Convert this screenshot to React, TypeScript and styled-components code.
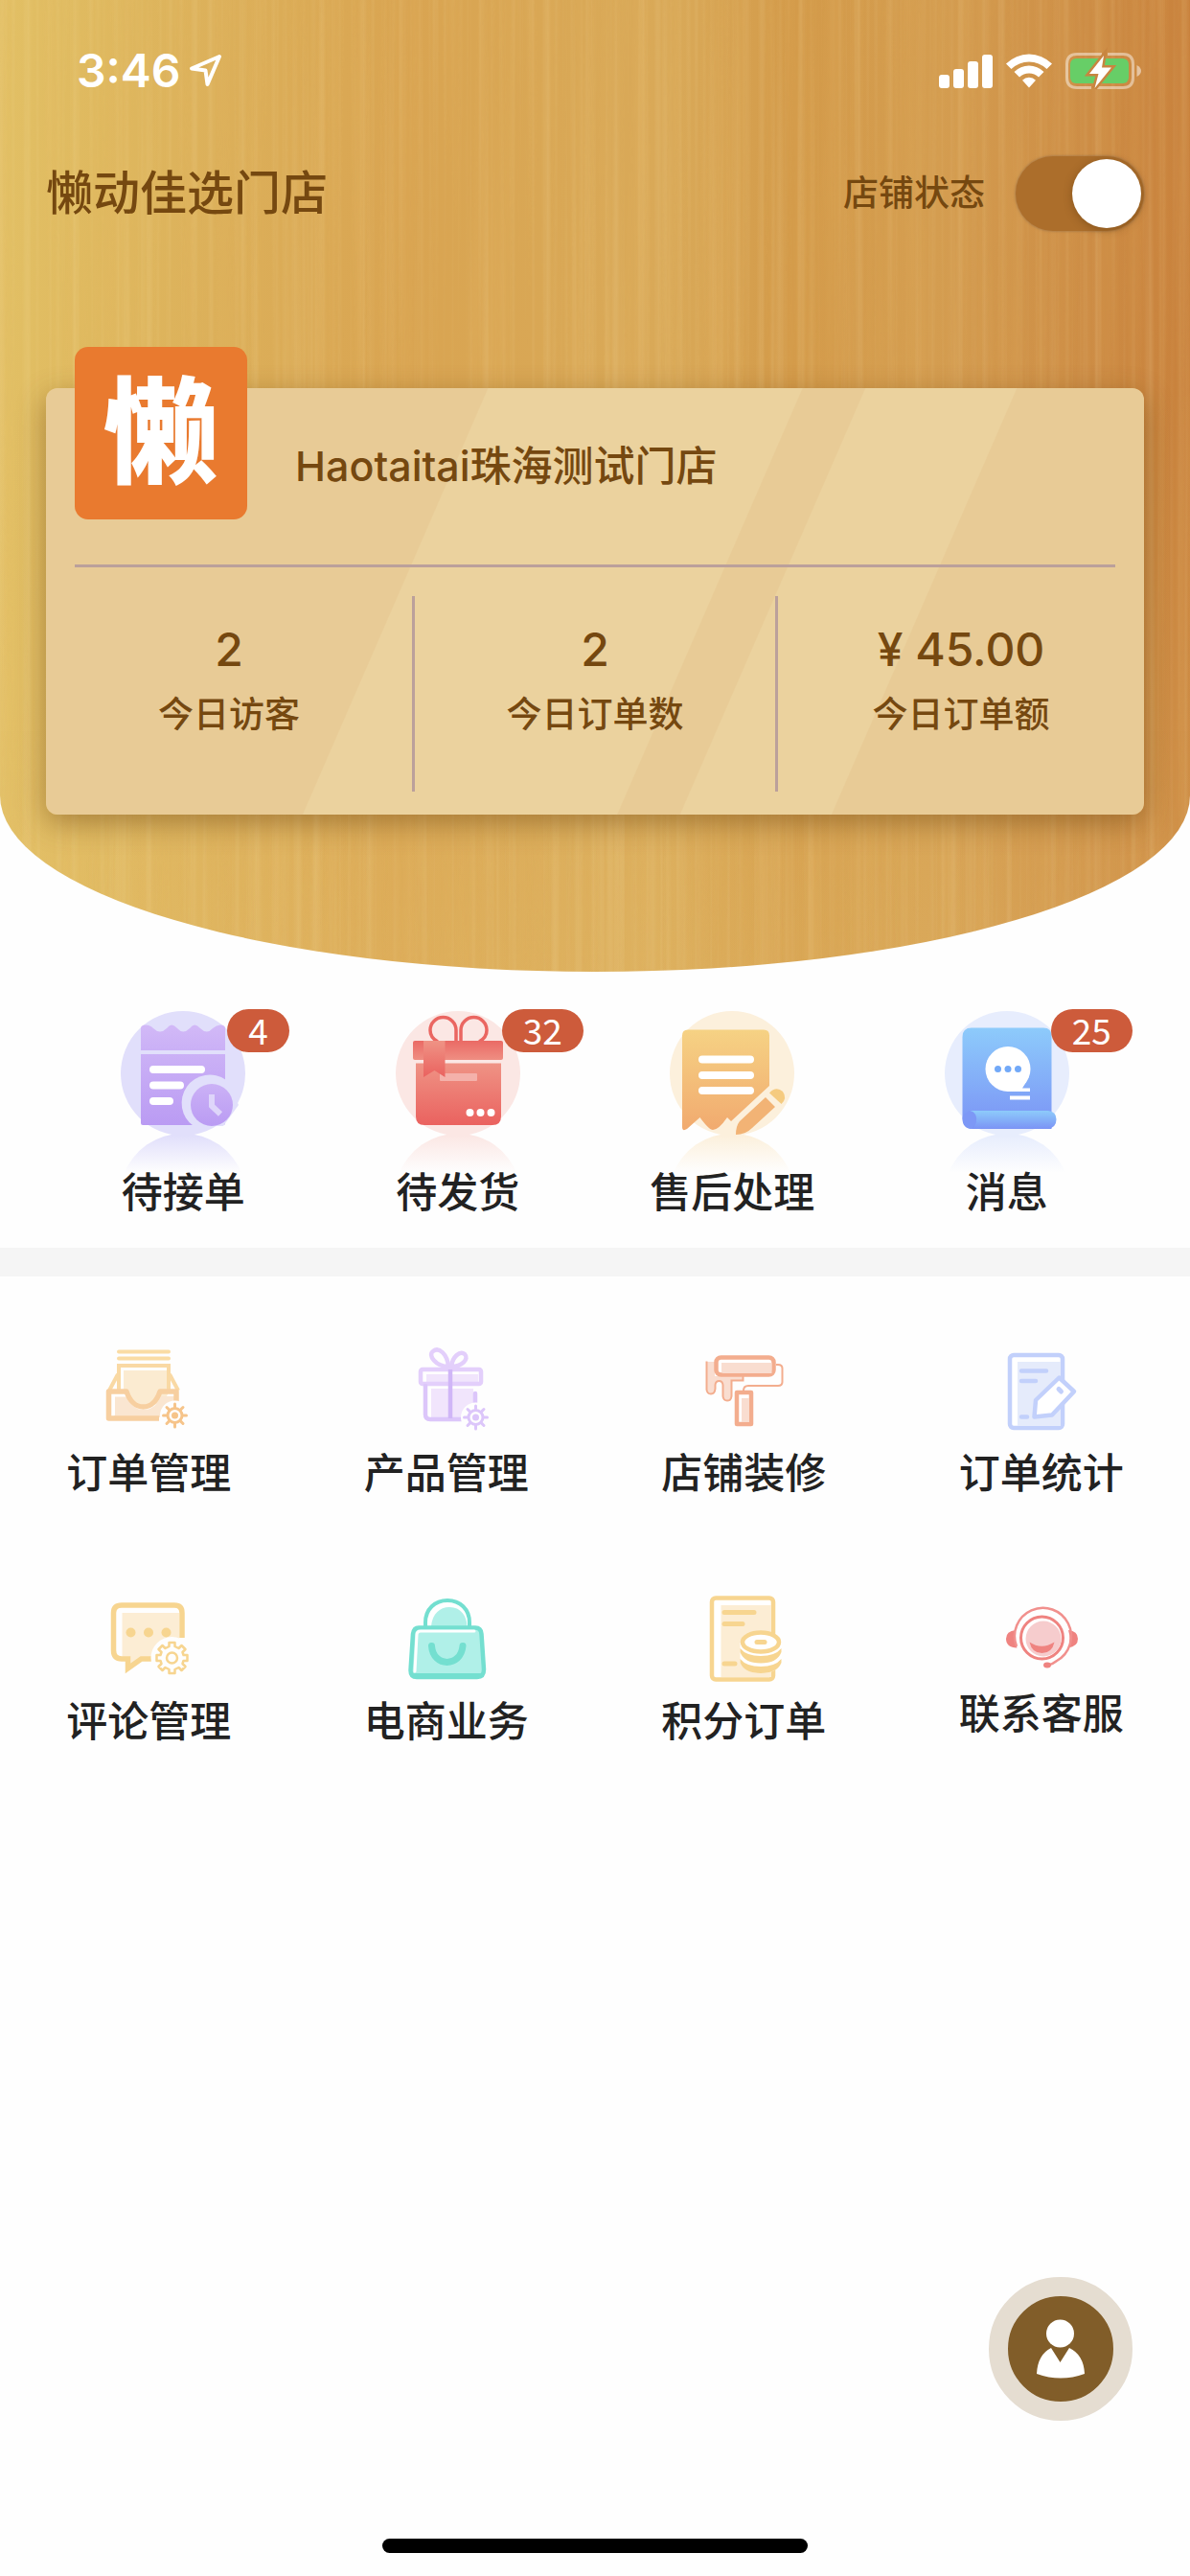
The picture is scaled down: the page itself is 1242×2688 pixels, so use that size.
import React, { useId, useState } from "react";
import styled, { createGlobalStyle } from "styled-components";

const GlobalStyle = createGlobalStyle`
  *, *::before, *::after { box-sizing: border-box; }
  body {
    margin: 0;
    background: #fefefe;
    color: #222;
    font-family: Inter, "Noto Sans CJK SC", sans-serif;
  }
`;

const Screen = styled.div`
  min-height: 100vh;
  overflow-x: hidden;
`;

/* ---------- header ---------- */

const Header = styled.header`
  position: relative;
  overflow: hidden;
  padding: 44px 48px 164px;
  border-radius: 0 0 50% 50% / 0 0 184px 184px;
  background:
    linear-gradient(180deg, rgba(232, 196, 112, 0) 40%, rgba(232, 196, 112, 0.3) 100%),
    linear-gradient(
      91deg,
      #e2c065 0%,
      #dfb95f 8%,
      #dcb05a 18%,
      #d9a451 34%,
      #d9a856 48%,
      #d9a958 56%,
      #d39a49 66%,
      #d49d50 78%,
      #cd8d45 90%,
      #c8803b 100%
    );
  color: #754810;
`;

const Grain = styled.svg`
  position: absolute;
  inset: 0;
  width: 100%;
  height: 100%;
`;

const StatusBar = styled.div`
  position: relative;
  display: flex;
  align-items: center;
  justify-content: space-between;
  height: 60px;
  padding: 0 2px 0 32px;
  color: #fff;
`;

const StatusGroup = styled.div<{ $gap: number }>`
  display: flex;
  align-items: center;
  gap: ${(p) => p.$gap}px;
`;

const Clock = styled.span`
  font-size: 48px;
  font-weight: 600;
  line-height: 60px;
`;

const TitleRow = styled.div`
  position: relative;
  display: flex;
  align-items: center;
  justify-content: space-between;
  margin-top: 59px;
`;

const Title = styled.h1`
  margin: 0;
  font-size: 49px;
  font-weight: 500;
  line-height: 60px;
`;

const SwitchLabel = styled.label`
  display: flex;
  align-items: center;
  gap: 32px;
  font-size: 37px;
  font-weight: 500;
  line-height: 50px;
`;

const Switch = styled.input`
  appearance: none;
  display: flex;
  width: 134px;
  height: 78px;
  margin: 0;
  padding: 3px;
  border-radius: 39px;
  background: #c9a273;
  box-shadow: 0 0 2px 1px rgba(150, 110, 70, 0.5);

  &::before {
    content: "";
    width: 72px;
    height: 72px;
    border-radius: 50%;
    background: #fff;
    box-shadow: 0 2px 10px rgba(70, 40, 0, 0.35);
  }
  &:checked {
    justify-content: flex-end;
    background: #ac6e2b;
  }
`;

const Card = styled.section`
  position: relative;
  margin-top: 164px;
  padding-bottom: 24px;
  border-radius: 12px;
  background: linear-gradient(
    113.5deg,
    #e8cb96 34.4%,
    #ebd29e 34.5%,
    #ebd29e 58.9%,
    #e8cb96 59%,
    #e8cb96 63.8%,
    #ebd29e 63.9%,
    #ebd29e 75.6%,
    #e8cb96 75.7%
  );
  box-shadow: 0 9px 30px rgba(100, 60, 10, 0.45);
`;

const CardHead = styled.div`
  display: flex;
  align-items: flex-start;
  gap: 50px;
  height: 187px;
  margin: 0 30px;
  border-bottom: 3px solid #bba09b;
`;

const Logo = styled.div`
  display: flex;
  align-items: center;
  justify-content: center;
  width: 180px;
  height: 180px;
  margin-top: -43px;
  border-radius: 14px;
  background: #e97a2f;
  color: #fff;
  font-size: 120px;
  font-weight: 900;
  line-height: 180px;
`;

const StoreName = styled.h2`
  margin: 51px 0 0;
  font-size: 43px;
  font-weight: 500;
  line-height: 60px;
`;

const Stats = styled.dl`
  display: grid;
  grid-template-columns: repeat(3, 1fr);
  margin: 30px 0 0;
`;

const Stat = styled.div`
  display: flex;
  flex-direction: column-reverse;
  gap: 13px;
  padding: 26px 0 55px;
  font-weight: 500;
  text-align: center;

  &:nth-child(2) {
    border: solid #bba09b;
    border-width: 0 3px;
  }
`;

const StatLabel = styled.dt`
  font-size: 37px;
  line-height: 50px;
`;

const StatValue = styled.dd`
  margin: 0;
  font-size: 48px;
  line-height: 60px;
`;

/* ---------- menus ---------- */

const QuickNav = styled.nav`
  display: grid;
  grid-template-columns: repeat(4, 1fr);
  padding: 40px 48px 28px;
  border-bottom: 30px solid #f5f5f5;
`;

const MenuGrid = styled.nav`
  display: grid;
  grid-template-columns: repeat(4, 1fr);
  row-gap: 97px;
  padding-top: 73px;
`;

const MenuLink = styled.a<{ $gap: number }>`
  display: flex;
  flex-direction: column;
  align-items: center;
  gap: ${(p) => p.$gap}px;
  color: #222;
  font-size: 43px;
  font-weight: 500;
  line-height: 60px;
  text-decoration: none;
`;

const QuickIcon = styled.span`
  position: relative;
  display: block;
  width: 132px;
  height: 160px;
`;

const Art = styled.svg`
  display: block;
  overflow: visible;
  fill: none;
`;

const Badge = styled.span`
  position: absolute;
  left: 112px;
  top: -1px;
  padding: 0 22px 2px;
  border-radius: 23px;
  background: #cd5b3b;
  color: #fff;
  font-family: "Noto Sans CJK SC", sans-serif;
  font-size: 37px;
  font-weight: 400;
  line-height: 43px;
`;

const ProfileButton = styled.button`
  position: fixed;
  right: 60px;
  bottom: 162px;
  width: 150px;
  height: 150px;
  padding: 0;
  border: 20px solid #e5ddd1;
  border-radius: 50%;
  background: #815d29;
`;

const HomeIndicator = styled.div`
  position: fixed;
  bottom: 24px;
  left: 50%;
  width: 444px;
  height: 15px;
  margin-left: -222px;
  border-radius: 8px;
  background: #000;
`;

/* ---------- status icons ---------- */

const LocationIcon = () => (
  <Art width="36" height="36" viewBox="0 0 36 36" aria-hidden="true">
    <path d="M32 3 L3 15.500 L17.500 17.500 L19.500 32 Z" stroke="#fff" strokeWidth="4" strokeLinejoin="round" />
  </Art>
);

const SignalIcon = () => (
  <Art width="56" height="36" viewBox="0 0 56 36" aria-hidden="true">
    <g fill="#fff">
      <rect x="0" y="22" width="11" height="14" rx="3" />
      <rect x="15" y="16" width="11" height="20" rx="3" />
      <rect x="30" y="8" width="11" height="28" rx="3" />
      <rect x="45" y="1" width="11" height="35" rx="3" />
    </g>
  </Art>
);

const WifiIcon = () => (
  <Art width="48" height="36" viewBox="0 0 48 36" aria-hidden="true">
    <g fill="#fff">
      <path d="M0 10.500 A34 34 0 0 1 48 10.500 L42.500 16 A26.500 26.500 0 0 0 5.500 16 Z" />
      <path d="M8.500 19 A22 22 0 0 1 39.500 19 L34 24.500 A14.500 14.500 0 0 0 14 24.500 Z" />
      <path d="M17 27.700 A10 10 0 0 1 31 27.700 L24 35.500 Z" />
    </g>
  </Art>
);

const BatteryIcon = () => (
  <Art width="80" height="38" viewBox="0 0 80 38" aria-hidden="true">
    <path d="M38 1.500 H12 Q1.500 1.500 1.500 12 V26 Q1.500 36.500 12 36.500 H27" stroke="#fff" strokeOpacity=".45" strokeWidth="3" />
    <path d="M44 1.500 H60 Q70.500 1.500 70.500 12 V26 Q70.500 36.500 60 36.500 H33" stroke="#fff" strokeOpacity=".45" strokeWidth="3" />
    <path d="M74.500 13 Q79 15.500 79 19 Q79 22.500 74.500 25 Z" fill="#fff" fillOpacity=".5" />
    <rect x="5" y="6" width="61" height="26" rx="6" fill="#67ce67" />
    <path d="M40 3 L25 22 H34.500 L30.500 37 L48 15.500 H38 Z" fill="#fff" stroke="#c88540" strokeWidth="5" paintOrder="stroke" />
  </Art>
);

/* ---------- quick icons ---------- */

type FadeProps = { id: string; from: string; to: string };

const Fade = ({ id, from, to }: FadeProps) => (
  <linearGradient id={id} x1="0" y1="0" x2="0" y2="1">
    <stop offset="0" stopColor={from} />
    <stop offset="1" stopColor={to} />
  </linearGradient>
);

const Orb = ({ tint, children }: { tint: string; children: React.ReactNode }) => {
  const id = useId();
  return (
    <Art width="132" height="160" viewBox="0 0 132 160" aria-hidden="true">
      <defs>
        <linearGradient id={id} gradientUnits="userSpaceOnUse" x1="0" y1="131" x2="0" y2="170">
          <stop offset="0" stopColor={tint} />
          <stop offset="1" stopColor={tint} stopOpacity="0" />
        </linearGradient>
      </defs>
      <circle cx="66" cy="66" r="65" fill={tint} />
      <path d="M4 172 A66 66 0 0 1 128 172 Z" fill={`url(#${id})`} />
      {children}
    </Art>
  );
};

const PendingIcon = () => (
  <Orb tint="#e1dffb">
    <defs>
      <Fade id="pendTop" from="#d2b9f7" to="#cab0f6" />
      <Fade id="pendBody" from="#cbb1f6" to="#ba9bf3" />
    </defs>
    <path d="M22 19 Q22 15.500 27 15.500 Q32 15.500 35 19 Q42 26 49 19 Q54 12 60 19 Q66 26 73 19 Q78 12 84 19 Q91 26 97 19 Q101 15.500 105 15.500 Q110 15.500 110 19 V42 H22 Z" fill="url(#pendTop)" />
    <path d="M22 46 H110 V118 Q110 120 108 120 H24 Q22 120 22 118 Z" fill="url(#pendBody)" />
    <path d="M77 121 A26.500 26.500 0 0 1 111 73 L124 99 L108 121 Z" fill="#e1dffb" />
    <circle cx="96" cy="99" r="22" fill="url(#pendBody)" />
    <path d="M96 88 V100 L105 108.500" stroke="#ded5fa" strokeWidth="6" />
    <path d="M35 62 H85 M35 78.500 H63 M35 95 H52" stroke="#fff" strokeWidth="8" strokeLinecap="round" />
  </Orb>
);

const ShipIcon = () => (
  <Orb tint="#fbe7e4">
    <defs>
      <Fade id="shipBox" from="#ef9385" to="#ea625f" />
      <Fade id="shipLid" from="#ea6a65" to="#ef8e82" />
    </defs>
    <g stroke="#ea6661" strokeWidth="3.500">
      <path d="M45 33 Q37 29 37 21 A13.500 13.500 0 0 1 64 21 V33" />
      <path d="M88 33 Q96 29 96 21 A13.500 13.500 0 0 0 69 21 V33" />
    </g>
    <rect x="19" y="32" width="94" height="20" rx="2" fill="url(#shipLid)" />
    <path d="M22 55.500 H111 V111 Q111 120 102 120 H31 Q22 120 22 111 Z" fill="url(#shipBox)" />
    <rect x="47" y="66" width="39" height="8" rx="1" fill="#f4b1aa" />
    <path d="M30 32 H52.500 V70 L41.500 63 L30 70 Z" fill="url(#shipBox)" />
    <g fill="#fff">
      <circle cx="78.500" cy="107" r="4" />
      <circle cx="89.500" cy="107" r="4" />
      <circle cx="100.500" cy="107" r="4" />
    </g>
  </Orb>
);

const AfterSaleIcon = () => (
  <Orb tint="#fcf0dc">
    <defs>
      <Fade id="afterPaper" from="#f6d284" to="#f1aa6f" />
    </defs>
    <path d="M20 20.500 H99 Q105 20.500 105 26.500 V79 L65 116 L61 112 Q52 125 46 125 Q42 125 32.500 112 L19 124 Q14 127 14 122 V26.500 Q14 20.500 20 20.500 Z" fill="url(#afterPaper)" />
    <path d="M70 130 Q70 121 74 116 L101 91 L111 101 L87 123 Q80 130 70 130 Z" fill="#f2b375" />
    <path d="M105 86.500 Q112 79 119 85 Q124 92 117.500 98 Z" fill="#f5cb80" />
    <path d="M35 51.500 H85 M35 68 H85 M35 84 H85" stroke="#fff" strokeWidth="8" strokeLinecap="round" />
  </Orb>
);

const MessageIcon = () => (
  <Orb tint="#e7edfd">
    <defs>
      <Fade id="msgPage" from="#8dcbfb" to="#7b93f5" />
    </defs>
    <path d="M29 18.500 H104 Q112.500 18.500 112.500 27 V124 H30 Q19.500 124 19.500 113 V28 Q19.500 18.500 29 18.500 Z" fill="url(#msgPage)" />
    <path d="M27 105 H109 Q117.500 106 117.500 114 Q117.500 123 108 124 H30 Q35 118 34 112 Q33 106 27 105 Z" fill="url(#msgPage)" />
    <path d="M27 105 Q34 108 34 114 Q34 121 28 124 Q20 122 19.500 113 Q20 108 27 105 Z" fill="#7d98f6" />
    <circle cx="67" cy="61.500" r="23.500" fill="#fff" />
    <path d="M66 85 H90 V81.500 H82 L86 75 L70 72 Z M69 89.500 H90 V93.500 H69 Z" fill="#fff" />
    <g fill="#72a9f8">
      <circle cx="56.500" cy="61.500" r="3.500" />
      <circle cx="67" cy="61.500" r="3.500" />
      <circle cx="77.500" cy="61.500" r="3.500" />
    </g>
  </Orb>
);

/* ---------- menu icons ---------- */

const Icon = ({ size = 90, children }: { size?: number; children: React.ReactNode }) => (
  <Art width={size} height={size} viewBox={`0 0 ${size} ${size}`} aria-hidden="true">
    {children}
  </Art>
);

const Cog = ({ cx, cy, color }: { cx: number; cy: number; color: string }) => (
  <g transform={`translate(${cx} ${cy})`}>
    <circle r="15.500" fill="#fefefe" />
    <circle r="7.500" stroke={color} strokeWidth="3" />
    <circle r="3.500" fill={color} />
    {[0, 45, 90, 135, 180, 225, 270, 315].map((a) => (
      <path key={a} d="M0 -8 V-12" stroke={color} strokeWidth="3" strokeLinecap="round" transform={`rotate(${a})`} />
    ))}
  </g>
);

const OrdersIcon = () => (
  <Icon>
    <path d="M14 5.500 H66 M14 12.500 H66" stroke="#fadca4" strokeWidth="4" strokeLinecap="round" />
    <path d="M19 25 H65 V50 Q60 62 40 62 Q24 62 19 48 Z" fill="#fbebd1" />
    <path d="M14 46 V20 H66 V46 M13 29 L4 46 M67 29 L76 46" stroke="#f9d9a4" strokeWidth="4" />
    <path d="M9 52 H22 Q28 66 40 66 Q52 66 58 52 H74 V74 H9 Z" fill="#fae6d1" />
    <path d="M8.500 72 V51 H22" stroke="#fff" strokeWidth="3" />
    <path d="M74 58 V47 H57 C54 56 48 63 39.500 63 C31 63 25 56 22 47 H3.500 V75 H56" stroke="#f7cfa0" strokeWidth="5.500" strokeLinejoin="round" />
    <Cog cx={72.5} cy={72} color="#f6c48a" />
  </Icon>
);

const ProductsIcon = () => (
  <Icon>
    <path d="M29 44 H73 V74 H29 Z M24 29 H78 V37 H24 Z" fill="#f1e5fc" />
    <g stroke="#e3cffb" strokeWidth="4.500" strokeLinecap="round" strokeLinejoin="round">
      <path d="M47 21 C34 21 25 9 31 5 C37 0 46 8 47 21 Z" />
      <path d="M50 21 C51 11 59 4 64 8 C69 13 61 21 50 21 Z" />
      <rect x="18" y="24" width="63" height="15" rx="2" />
    </g>
    <path d="M23 41 V71 Q23 76 28 76 H61 M75 49 V59" stroke="#dcc6fa" strokeWidth="4.500" strokeLinecap="round" />
    <path d="M49 24 V75" stroke="#d0b6f7" strokeWidth="4.500" />
    <Cog cx={75.5} cy={74} color="#dcc6fa" />
  </Icon>
);

const DecorateIcon = () => (
  <Icon>
    <path d="M6 16 V45 Q7 49 11 49 Q15 49 15.500 44 V40 Q16 36 19.500 36 Q23 36 23.500 40 V52 Q24 56.500 28 56.500 Q32 56.500 32.500 52 V35.500 H44.500 V31 H15 V16 Z" fill="#f9ddd0" />
    <path d="M6.500 15.500 V45 Q7 49.500 11 49.500 Q15 49.500 15.500 44 V40 Q16 36 19.500 36 Q23 36 23.500 40 V52 Q24 56.500 28 56.500 Q32 56.500 32.500 52 V35.500 H44.500 V31" stroke="#f3ad8e" strokeWidth="2" />
    <path d="M79 19 H81 Q85.500 19 85.500 23 V37 Q85.500 41 81 41 H50 Q45 41 45 46" stroke="#f3ad8e" strokeWidth="2" />
    <rect x="16.500" y="11.500" width="60" height="18" rx="5" fill="#fff" stroke="#f3ad8e" strokeWidth="4.500" />
    <path d="M22 17 H74.500 V28 H24 Q22 28 22 26 Z" fill="#f9ddd0" />
    <rect x="38" y="48" width="15" height="33" fill="#fff" stroke="#f3ad8e" strokeWidth="4.500" strokeLinejoin="round" />
    <path d="M43 54 H51 V79 H43 Z" fill="#f9ddd0" />
  </Icon>
);

const StatisticsIcon = () => (
  <Icon>
    <rect x="12" y="9" width="55" height="76" rx="4" fill="#fff" stroke="#c2d0fb" strokeWidth="4.500" />
    <path d="M20 16 H65 V83 H20 Z" fill="#e5ebfb" />
    <path d="M24 25.500 H50 M24 36 H39 M24 73.500 H30" stroke="#c2d0fb" strokeWidth="4.500" strokeLinecap="round" />
    <path d="M63.500 32.500 L79 47 L56 71.500 L37.500 73.500 L39 56 Z" fill="#fff" stroke="#c2d0fb" strokeWidth="4.500" strokeLinejoin="round" />
    <path d="M63 44.500 L65.500 47" stroke="#c2d0fb" strokeWidth="5" strokeLinecap="round" />
  </Icon>
);

const ReviewsIcon = () => (
  <Icon>
    <path d="M17.500 19 H77 V67 H34 L26 73 V67 H17.500 Z" fill="#fcedd4" />
    <path d="M80 45 V19 Q80 11 72 11 H17 Q8.500 11 8.500 19 V58 Q8.500 67 17 67 H23.500 V77 L37.500 67 H48" stroke="#f7d590" strokeWidth="5.500" />
    <g fill="#f7d590">
      <circle cx="26.500" cy="39.500" r="5" />
      <circle cx="45" cy="39.500" r="5" />
      <circle cx="63.500" cy="39.500" r="5" />
    </g>
    <circle cx="69.500" cy="66" r="22" fill="#fefefe" />
    <g transform="translate(69.500 66)" stroke="#f7d590" strokeWidth="2.500" strokeLinejoin="round">
      <path d="M-3 -16 H3 V-12 L7 -10 L10 -13 L14 -9 L11 -6 L12 -3 H16 V3 H12 L11 6 L14 9 L10 13 L7 10 L3 12 V16 H-3 V12 L-7 10 L-10 13 L-14 9 L-11 6 L-12 3 H-16 V-3 H-12 L-11 -6 L-14 -9 L-10 -13 L-7 -10 L-3 -12 Z" />
      <circle r="5.500" />
    </g>
  </Icon>
);

const CommerceIcon = () => (
  <Icon>
    <path d="M23 34 V29 C23 15 33 6 46 6 C59 6 69 15 69 29 V34" fill="#fff" stroke="#74dfd0" strokeWidth="4" />
    <path d="M29 33 C30 20 38 13 48 13 C60 13 66 22 66.500 33 Z" fill="#b0f0e8" />
    <path d="M16 34.500 H75 Q81 34.500 81.500 41 L84 78 Q84 86 77 86 H14 Q7.500 86 7.500 79 L10 41 Q11 34.500 16 34.500 Z" fill="#b0f0e8" stroke="#74dfd0" strokeWidth="4.500" />
    <path d="M12 80 L14 42 Q14 38 18 38 H74" stroke="#fff" strokeWidth="3" strokeLinecap="round" />
    <path d="M10 83.500 H82" stroke="#74dfd0" strokeWidth="3" />
    <path d="M29.500 53.500 C31 76 60 76 62 53.500" stroke="#74dfd0" strokeWidth="7" strokeLinecap="round" />
  </Icon>
);

const PointsIcon = () => (
  <Icon>
    <rect x="12" y="3.500" width="64" height="85" rx="4" fill="#fff" stroke="#f7d590" strokeWidth="4.500" />
    <path d="M21.500 11 H74 V86 H21.500 Z" fill="#fcedd4" />
    <path d="M25 18.500 H56 M25 30.500 H44 M25 72 H36" stroke="#f7d590" strokeWidth="5" strokeLinecap="round" />
    <path d="M41.500 50 H84.500 V71 Q80 82 63 82 Q46 82 41.500 71 Z" fill="#fff" />
    <path d="M41.500 67 Q48 75 63 75 Q78 75 84.500 67 V71 Q80 82 63 82 Q46 82 41.500 71 Z" fill="#f7d590" />
    <path d="M41.500 56 Q48 64 63 64 Q78 64 84.500 56 V60 Q80 71.500 63 71.500 Q46 71.500 41.500 60 Z" fill="#f7d590" />
    <ellipse cx="63" cy="49.500" rx="19" ry="10" fill="#fff" stroke="#f7d590" strokeWidth="4.500" />
    <path d="M59 49.500 H67" stroke="#f7d590" strokeWidth="5" strokeLinecap="round" />
  </Icon>
);

const SupportIcon = () => (
  <Icon size={82}>
    <path d="M14 37 Q4 38 4 46 Q4 55 15.500 55.500 Q12 46 14 37 Z M69 37 Q79 38 79 46 Q79 54 69 55.500 Q72 46 69 37 Z" fill="#ef8380" />
    <path d="M15 54 A29.500 29.500 0 1 1 57 69 Q52 73 47 74" stroke="#f1908d" strokeWidth="2.500" />
    <ellipse cx="47" cy="73.500" rx="4" ry="3" fill="#ef8380" />
    <circle cx="41.500" cy="45" r="22" fill="#fff" stroke="#ef8380" strokeWidth="3" />
    <circle cx="43" cy="46" r="18.500" fill="#f6cccd" />
    <path d="M28.500 49.500 Q41 58 54.500 49.500 Q52 61 41.500 61 Q31 61 28.500 49.500 Z" fill="#ef8380" />
  </Icon>
);

/* ---------- page ---------- */

const stats = [
  { label: "今日访客", value: "2" },
  { label: "今日订单数", value: "2" },
  { label: "今日订单额", value: "¥ 45.00" },
];

const quickItems = [
  { label: "待接单", count: 4, Picture: PendingIcon },
  { label: "待发货", count: 32, Picture: ShipIcon },
  { label: "售后处理", count: 0, Picture: AfterSaleIcon },
  { label: "消息", count: 25, Picture: MessageIcon },
];

const menuItems = [
  { label: "订单管理", Picture: OrdersIcon },
  { label: "产品管理", Picture: ProductsIcon },
  { label: "店铺装修", Picture: DecorateIcon },
  { label: "订单统计", Picture: StatisticsIcon },
  { label: "评论管理", Picture: ReviewsIcon },
  { label: "电商业务", Picture: CommerceIcon },
  { label: "积分订单", Picture: PointsIcon },
  { label: "联系客服", Picture: SupportIcon },
];

export default function App() {
  const [open, setOpen] = useState(true);

  return (
    <Screen>
      <GlobalStyle />
      <Header>
        <Grain aria-hidden="true">
          <filter id="woodLight" x="0" y="0" width="100%" height="100%">
            <feTurbulence type="fractalNoise" baseFrequency="0.12 0.0008" numOctaves="3" seed="4" />
            <feColorMatrix values="0 0 0 0 1  0 0 0 0 0.880  0 0 0 0 0.550  1.800 0 0 0 -0.800" />
          </filter>
          <filter id="woodDark" x="0" y="0" width="100%" height="100%">
            <feTurbulence type="fractalNoise" baseFrequency="0.05 0.0012" numOctaves="3" seed="11" />
            <feColorMatrix values="0 0 0 0 0.820  0 0 0 0 0.500  0 0 0 0 0.150  1.800 0 0 0 -0.800" />
          </filter>
          <rect width="100%" height="100%" filter="url(#woodLight)" opacity="0.18" />
          <rect width="100%" height="100%" filter="url(#woodDark)" opacity="0.2" />
        </Grain>

        <StatusBar>
          <StatusGroup $gap={8}>
            <Clock>3:46</Clock>
            <LocationIcon />
          </StatusGroup>
          <StatusGroup $gap={14}>
            <SignalIcon />
            <WifiIcon />
            <BatteryIcon />
          </StatusGroup>
        </StatusBar>

        <TitleRow>
          <Title>懒动佳选门店</Title>
          <SwitchLabel>
            店铺状态
            <Switch type="checkbox" checked={open} onChange={(e) => setOpen(e.target.checked)} />
          </SwitchLabel>
        </TitleRow>

        <Card>
          <CardHead>
            <Logo>懒</Logo>
            <StoreName>Haotaitai珠海测试门店</StoreName>
          </CardHead>
          <Stats>
            {stats.map((s) => (
              <Stat key={s.label}>
                <StatLabel>{s.label}</StatLabel>
                <StatValue>{s.value}</StatValue>
              </Stat>
            ))}
          </Stats>
        </Card>
      </Header>

      <QuickNav>
        {quickItems.map(({ label, count, Picture }) => (
          <MenuLink key={label} href="#" $gap={0}>
            <QuickIcon>
              <Picture />
              {count > 0 && <Badge>{count}</Badge>}
            </QuickIcon>
            <span>{label}</span>
          </MenuLink>
        ))}
      </QuickNav>

      <MenuGrid>
        {menuItems.map(({ label, Picture }) => (
          <MenuLink key={label} href="#" $gap={12}>
            <Picture />
            <span>{label}</span>
          </MenuLink>
        ))}
      </MenuGrid>

      <ProfileButton type="button" aria-label="我的">
        <Art width="110" height="110" viewBox="0 0 110 110" aria-hidden="true">
          <circle cx="54.500" cy="39" r="14.500" fill="#fff" />
          <path d="M45 54 L54.500 69 L64 54 Q79 61 80 81 Q55 90 30 81 Q31 61 45 54 Z" fill="#fff" />
        </Art>
      </ProfileButton>
      <HomeIndicator />
    </Screen>
  );
}
